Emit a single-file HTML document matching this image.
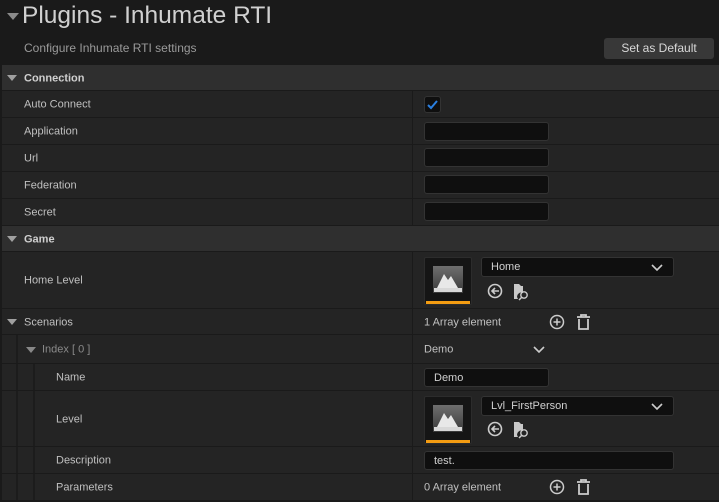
<!DOCTYPE html>
<html><head><meta charset="utf-8"><style>
*{margin:0;padding:0;box-sizing:border-box}
body{width:719px;height:502px;background:#1a1a1a;font-family:"Liberation Sans",sans-serif;color:#c0c0c0;font-size:11px;position:relative;overflow:hidden}
.a{position:absolute}
.row{position:absolute;left:2px;right:0;background:#242424;border-bottom:1px solid #1a1a1a}
.hdr{position:absolute;left:2px;right:0;background:#2f2f2f;border-bottom:1px solid #1a1a1a;font-weight:bold;color:#d0d0d0}
.lbl{position:absolute;top:50%;transform:translateY(-45%);white-space:nowrap}
.vl{position:absolute;left:410px;top:0;bottom:0;width:1px;background:#1a1a1a}
.tri{position:absolute;width:0;height:0;border-left:5px solid transparent;border-right:5px solid transparent;border-top:6px solid #a0a0a0}
.inp{position:absolute;background:#0f0f0f;border:1px solid #333;border-radius:3px;color:#d0d0d0;padding-left:9px;line-height:18px}
.strip{position:absolute;top:0;bottom:0;width:2px;background:#1c1c1c}
.thumb{position:absolute;width:48px;height:48px;background:#151515;border:1px solid #2c2c2c;border-radius:2px}
.thumb .bar{position:absolute;left:1px;right:1px;bottom:0;height:3px;background:#f39c12}
.thumb .img{position:absolute;left:8px;top:8px;width:30px;height:27px;background:linear-gradient(#6e6e6e,#3a3a3a)}
</style></head><body>
<div class="tri" style="left:7px;top:13px;border-left-width:6px;border-right-width:6px;border-top:7px solid #8a8a8a"></div>
<div class="a" style="left:22px;top:2px;font-size:24.5px;color:#d0d0d0">Plugins - Inhumate RTI</div>
<div class="a" style="left:24px;top:41px;font-size:12px;color:#9a9a9a">Configure Inhumate RTI settings</div>
<div class="a" style="left:604px;top:38px;width:110px;height:21px;background:#383838;border-radius:3px;color:#d8d8d8;font-size:12px;text-align:center;line-height:21px">Set as Default</div>

<div class="hdr" style="top:65px;height:26px"><div class="tri" style="left:5px;top:10px"></div><div class="lbl" style="left:22px">Connection</div></div>

<div class="row" style="top:91px;height:27px"><div class="vl"></div><div class="lbl" style="left:22px">Auto Connect</div>
<div class="a" style="left:422px;top:5px;width:17px;height:17px;background:#0f0f0f;border:1px solid #333;border-radius:3px"><svg width="15" height="15" style="position:absolute;left:0;top:0"><path d="M3 8 L6 11 L12 4" stroke="#2a7fe0" stroke-width="2" fill="none"/></svg></div></div>
<div class="row" style="top:118px;height:27px"><div class="vl"></div><div class="lbl" style="left:22px">Application</div><div class="inp" style="left:422px;top:4px;width:125px;height:19px"></div></div>
<div class="row" style="top:145px;height:27px"><div class="vl"></div><div class="lbl" style="left:22px">Url</div><div class="inp" style="left:422px;top:3px;width:125px;height:19px"></div></div>
<div class="row" style="top:172px;height:27px"><div class="vl"></div><div class="lbl" style="left:22px">Federation</div><div class="inp" style="left:422px;top:3px;width:125px;height:19px"></div></div>
<div class="row" style="top:199px;height:27px"><div class="vl"></div><div class="lbl" style="left:22px">Secret</div><div class="inp" style="left:422px;top:3px;width:125px;height:19px"></div></div>

<div class="hdr" style="top:226px;height:26px"><div class="tri" style="left:5px;top:10px"></div><div class="lbl" style="left:22px">Game</div></div>

<div class="row" style="top:252px;height:57px"><div class="vl"></div><div class="lbl" style="left:22px">Home Level</div>
<div class="thumb" style="left:422px;top:5px"><div class="img"><svg width="30" height="27"><path d="M4 22 L11 8 L15 14 L18 10 L25 22 Z" fill="#e8e8e8"/><rect x="1" y="22" width="28" height="4" fill="#d8d8d8"/></svg></div><div class="bar"></div></div>
<div class="inp" style="left:479px;top:5px;width:193px;height:20px;line-height:18px">Home<svg width="12" height="8" style="position:absolute;right:10px;top:6px"><path d="M1 1 L6 6 L11 1" stroke="#ccc" stroke-width="1.6" fill="none"/></svg></div>
<svg class="a" style="left:484px;top:31px" width="48" height="18"><circle cx="9" cy="8" r="6.5" stroke="#ccc" stroke-width="1.6" fill="none"/><path d="M13 8 H6 M9 5 L6 8 L9 11" stroke="#ccc" stroke-width="1.6" fill="none"/><path d="M28 1 H33 L35 3 H37 V10 A4 4 0 0 0 32 16 H28 Z" fill="#c8c8c8"/><circle cx="38" cy="12" r="3.2" stroke="#ccc" stroke-width="1.4" fill="none"/><path d="M35.5 14.5 L33 17" stroke="#ccc" stroke-width="1.5"/></svg>
</div>

<div class="row" style="top:309px;height:26px"><div class="vl"></div><div class="tri" style="left:5px;top:10px"></div><div class="lbl" style="left:22px">Scenarios</div>
<div class="lbl" style="left:422px">1 Array element</div>
<svg class="a" style="left:546px;top:5px" width="48" height="18"><circle cx="9" cy="8" r="6.5" stroke="#ccc" stroke-width="1.5" fill="none"/><path d="M9 4.5 V11.5 M5.5 8 H12.5" stroke="#ccc" stroke-width="1.5"/><path d="M29 3 H42 M33 3 V1 H38 V3 M31 5 V15 H40 V5" stroke="#ccc" stroke-width="1.8" fill="none"/></svg>
</div>

<div class="row" style="top:335px;height:29px"><div class="strip" style="left:14px"></div><div class="vl"></div><div class="tri" style="left:24px;top:12px;border-top-color:#888"></div><div class="lbl" style="left:40px;color:#8a8a8a">Index [ 0 ]</div>
<div class="lbl" style="left:422px">Demo</div><svg class="a" style="left:531px;top:11px" width="12" height="8"><path d="M1 1 L6 6 L11 1" stroke="#ccc" stroke-width="1.6" fill="none"/></svg></div>

<div class="row" style="top:364px;height:27px"><div class="strip" style="left:14px"></div><div class="strip" style="left:31px"></div><div class="vl"></div><div class="lbl" style="left:54px">Name</div><div class="inp" style="left:422px;top:4px;width:125px;height:19px">Demo</div></div>

<div class="row" style="top:391px;height:56px"><div class="strip" style="left:14px"></div><div class="strip" style="left:31px"></div><div class="vl"></div><div class="lbl" style="left:54px">Level</div>
<div class="thumb" style="left:422px;top:5px"><div class="img"><svg width="30" height="27"><path d="M4 22 L11 8 L15 14 L18 10 L25 22 Z" fill="#e8e8e8"/><rect x="1" y="22" width="28" height="4" fill="#d8d8d8"/></svg></div><div class="bar"></div></div>
<div class="inp" style="left:479px;top:5px;width:193px;height:20px;line-height:18px">Lvl_FirstPerson<svg width="12" height="8" style="position:absolute;right:10px;top:6px"><path d="M1 1 L6 6 L11 1" stroke="#ccc" stroke-width="1.6" fill="none"/></svg></div>
<svg class="a" style="left:484px;top:30px" width="48" height="18"><circle cx="9" cy="8" r="6.5" stroke="#ccc" stroke-width="1.6" fill="none"/><path d="M13 8 H6 M9 5 L6 8 L9 11" stroke="#ccc" stroke-width="1.6" fill="none"/><path d="M28 1 H33 L35 3 H37 V10 A4 4 0 0 0 32 16 H28 Z" fill="#c8c8c8"/><circle cx="38" cy="12" r="3.2" stroke="#ccc" stroke-width="1.4" fill="none"/><path d="M35.5 14.5 L33 17" stroke="#ccc" stroke-width="1.5"/></svg>
</div>

<div class="row" style="top:447px;height:27px"><div class="strip" style="left:14px"></div><div class="strip" style="left:31px"></div><div class="vl"></div><div class="lbl" style="left:54px">Description</div><div class="inp" style="left:422px;top:4px;width:250px;height:19px">test.</div></div>

<div class="row" style="top:474px;height:27px"><div class="strip" style="left:14px"></div><div class="strip" style="left:31px"></div><div class="vl"></div><div class="lbl" style="left:54px">Parameters</div>
<div class="lbl" style="left:422px">0 Array element</div>
<svg class="a" style="left:546px;top:5px" width="48" height="18"><circle cx="9" cy="8" r="6.5" stroke="#ccc" stroke-width="1.5" fill="none"/><path d="M9 4.5 V11.5 M5.5 8 H12.5" stroke="#ccc" stroke-width="1.5"/><path d="M29 3 H42 M33 3 V1 H38 V3 M31 5 V15 H40 V5" stroke="#ccc" stroke-width="1.8" fill="none"/></svg>
</div>
</body></html>
